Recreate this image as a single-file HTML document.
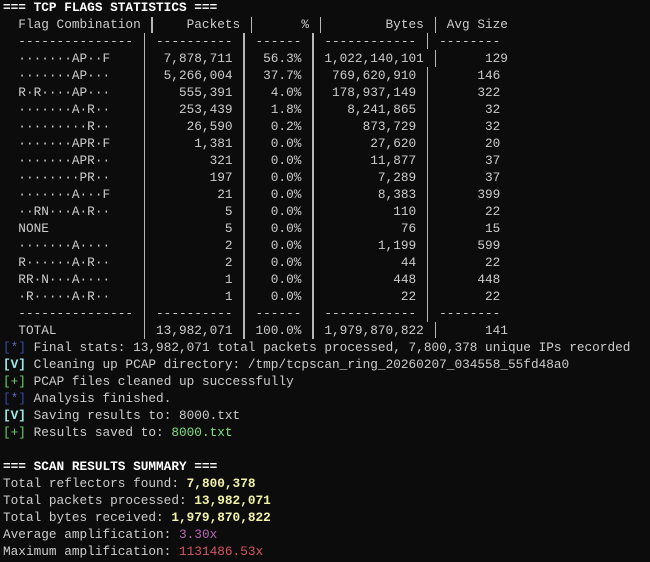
<!DOCTYPE html>
<html><head><meta charset="utf-8"><style>
html,body{margin:0;padding:0;background:#0c0c0c;width:650px;height:562px;overflow:hidden}
#t{position:absolute;left:3px;top:-1px;font-family:"Liberation Mono",monospace;font-size:12.75px;line-height:17px;color:#cccccc;white-space:normal}
.l{height:17px;white-space:pre}
.c{display:inline-block;white-space:pre}
.r{text-align:right}
.b{font-weight:bold;color:#ffffff}
.bl{color:#3a4aa8}.st{color:#5a6ac0}
.cy{color:#9fe6e6;font-weight:bold}
.gr{color:#6ccf6c}
.g2{color:#7fe07f}
.y{color:#f2f2a8;font-weight:bold}
.p{color:#b865b8}
.rd{color:#d65564}
.v{position:absolute;width:1.5px;background:#b8b8b8}
</style></head><body>
<div id="t">
<div class="l b">=== TCP FLAGS STATISTICS ===</div>
<div class="l"><span class="c" style="width:18ch">  Flag Combination</span><span class="c r" style="width:13ch">Packets</span><span class="c r" style="width:9ch">%</span><span class="c r" style="width:15ch">Bytes</span><span class="c">   Avg Size</span></div>
<div class="l"><span class="c" style="width:18ch">  ---------------</span><span class="c r" style="width:12ch">----------</span><span class="c r" style="width:9ch">------</span><span class="c r" style="width:15ch">------------</span><span class="c r" style="width:11ch">--------</span></div>
<div class="l"><span class="c" style="width:18ch">  ·······AP··F</span><span class="c r" style="width:12ch">7,878,711</span><span class="c r" style="width:9ch">56.3%</span><span class="c r" style="width:16ch">1,022,140,101</span><span class="c r" style="width:11ch">129</span></div>
<div class="l"><span class="c" style="width:18ch">  ·······AP···</span><span class="c r" style="width:12ch">5,266,004</span><span class="c r" style="width:9ch">37.7%</span><span class="c r" style="width:15ch">769,620,910</span><span class="c r" style="width:11ch">146</span></div>
<div class="l"><span class="c" style="width:18ch">  R·R····AP···</span><span class="c r" style="width:12ch">555,391</span><span class="c r" style="width:9ch">4.0%</span><span class="c r" style="width:15ch">178,937,149</span><span class="c r" style="width:11ch">322</span></div>
<div class="l"><span class="c" style="width:18ch">  ·······A·R··</span><span class="c r" style="width:12ch">253,439</span><span class="c r" style="width:9ch">1.8%</span><span class="c r" style="width:15ch">8,241,865</span><span class="c r" style="width:11ch">32</span></div>
<div class="l"><span class="c" style="width:18ch">  ·········R··</span><span class="c r" style="width:12ch">26,590</span><span class="c r" style="width:9ch">0.2%</span><span class="c r" style="width:15ch">873,729</span><span class="c r" style="width:11ch">32</span></div>
<div class="l"><span class="c" style="width:18ch">  ·······APR·F</span><span class="c r" style="width:12ch">1,381</span><span class="c r" style="width:9ch">0.0%</span><span class="c r" style="width:15ch">27,620</span><span class="c r" style="width:11ch">20</span></div>
<div class="l"><span class="c" style="width:18ch">  ·······APR··</span><span class="c r" style="width:12ch">321</span><span class="c r" style="width:9ch">0.0%</span><span class="c r" style="width:15ch">11,877</span><span class="c r" style="width:11ch">37</span></div>
<div class="l"><span class="c" style="width:18ch">  ········PR··</span><span class="c r" style="width:12ch">197</span><span class="c r" style="width:9ch">0.0%</span><span class="c r" style="width:15ch">7,289</span><span class="c r" style="width:11ch">37</span></div>
<div class="l"><span class="c" style="width:18ch">  ·······A···F</span><span class="c r" style="width:12ch">21</span><span class="c r" style="width:9ch">0.0%</span><span class="c r" style="width:15ch">8,383</span><span class="c r" style="width:11ch">399</span></div>
<div class="l"><span class="c" style="width:18ch">  ··RN···A·R··</span><span class="c r" style="width:12ch">5</span><span class="c r" style="width:9ch">0.0%</span><span class="c r" style="width:15ch">110</span><span class="c r" style="width:11ch">22</span></div>
<div class="l"><span class="c" style="width:18ch">  NONE</span><span class="c r" style="width:12ch">5</span><span class="c r" style="width:9ch">0.0%</span><span class="c r" style="width:15ch">76</span><span class="c r" style="width:11ch">15</span></div>
<div class="l"><span class="c" style="width:18ch">  ·······A····</span><span class="c r" style="width:12ch">2</span><span class="c r" style="width:9ch">0.0%</span><span class="c r" style="width:15ch">1,199</span><span class="c r" style="width:11ch">599</span></div>
<div class="l"><span class="c" style="width:18ch">  R······A·R··</span><span class="c r" style="width:12ch">2</span><span class="c r" style="width:9ch">0.0%</span><span class="c r" style="width:15ch">44</span><span class="c r" style="width:11ch">22</span></div>
<div class="l"><span class="c" style="width:18ch">  RR·N···A····</span><span class="c r" style="width:12ch">1</span><span class="c r" style="width:9ch">0.0%</span><span class="c r" style="width:15ch">448</span><span class="c r" style="width:11ch">448</span></div>
<div class="l"><span class="c" style="width:18ch">  ·R·····A·R··</span><span class="c r" style="width:12ch">1</span><span class="c r" style="width:9ch">0.0%</span><span class="c r" style="width:15ch">22</span><span class="c r" style="width:11ch">22</span></div>
<div class="l"><span class="c" style="width:18ch">  ---------------</span><span class="c r" style="width:12ch">----------</span><span class="c r" style="width:9ch">------</span><span class="c r" style="width:15ch">------------</span><span class="c r" style="width:11ch">--------</span></div>
<div class="l"><span class="c" style="width:18ch">  TOTAL</span><span class="c r" style="width:12ch">13,982,071</span><span class="c r" style="width:9ch">100.0%</span><span class="c r" style="width:16ch">1,979,870,822</span><span class="c r" style="width:11ch">141</span></div>
<div class="l"><span class="bl">[</span><span class="st">*</span><span class="bl">]</span> Final stats: 13,982,071 total packets processed, 7,800,378 unique IPs recorded</div>
<div class="l"><span class="cy">[V]</span> Cleaning up PCAP directory: /tmp/tcpscan_ring_20260207_034558_55fd48a0</div>
<div class="l"><span class="gr">[+]</span> PCAP files cleaned up successfully</div>
<div class="l"><span class="bl">[</span><span class="st">*</span><span class="bl">]</span> Analysis finished.</div>
<div class="l"><span class="cy">[V]</span> Saving results to: 8000.txt</div>
<div class="l"><span class="gr">[+]</span> Results saved to: <span class="g2">8000.txt</span></div>
<div class="l"> </div>
<div class="l b">=== SCAN RESULTS SUMMARY ===</div>
<div class="l">Total reflectors found: <span class="y">7,800,378</span></div>
<div class="l">Total packets processed: <span class="y">13,982,071</span></div>
<div class="l">Total bytes received: <span class="y">1,979,870,822</span></div>
<div class="l">Average amplification: <span class="p">3.30x</span></div>
<div class="l">Maximum amplification: <span class="rd">1131486.53x</span></div>
</div>
<div class="v" style="left:151.4px;top:17px;height:16px"></div>
<div class="v" style="left:250.9px;top:17px;height:16px"></div>
<div class="v" style="left:319.7px;top:17px;height:16px"></div>
<div class="v" style="left:434.5px;top:17px;height:16px"></div>
<div class="v" style="left:143.8px;top:33px;height:306px"></div>
<div class="v" style="left:243.2px;top:33px;height:306px"></div>
<div class="v" style="left:312.1px;top:33px;height:306px"></div>
<div class="v" style="left:426.8px;top:33px;height:16px"></div>
<div class="v" style="left:426.8px;top:67px;height:255px"></div>
<div class="v" style="left:434.5px;top:50px;height:17px"></div>
<div class="v" style="left:434.5px;top:322px;height:16px"></div>
</body></html>
